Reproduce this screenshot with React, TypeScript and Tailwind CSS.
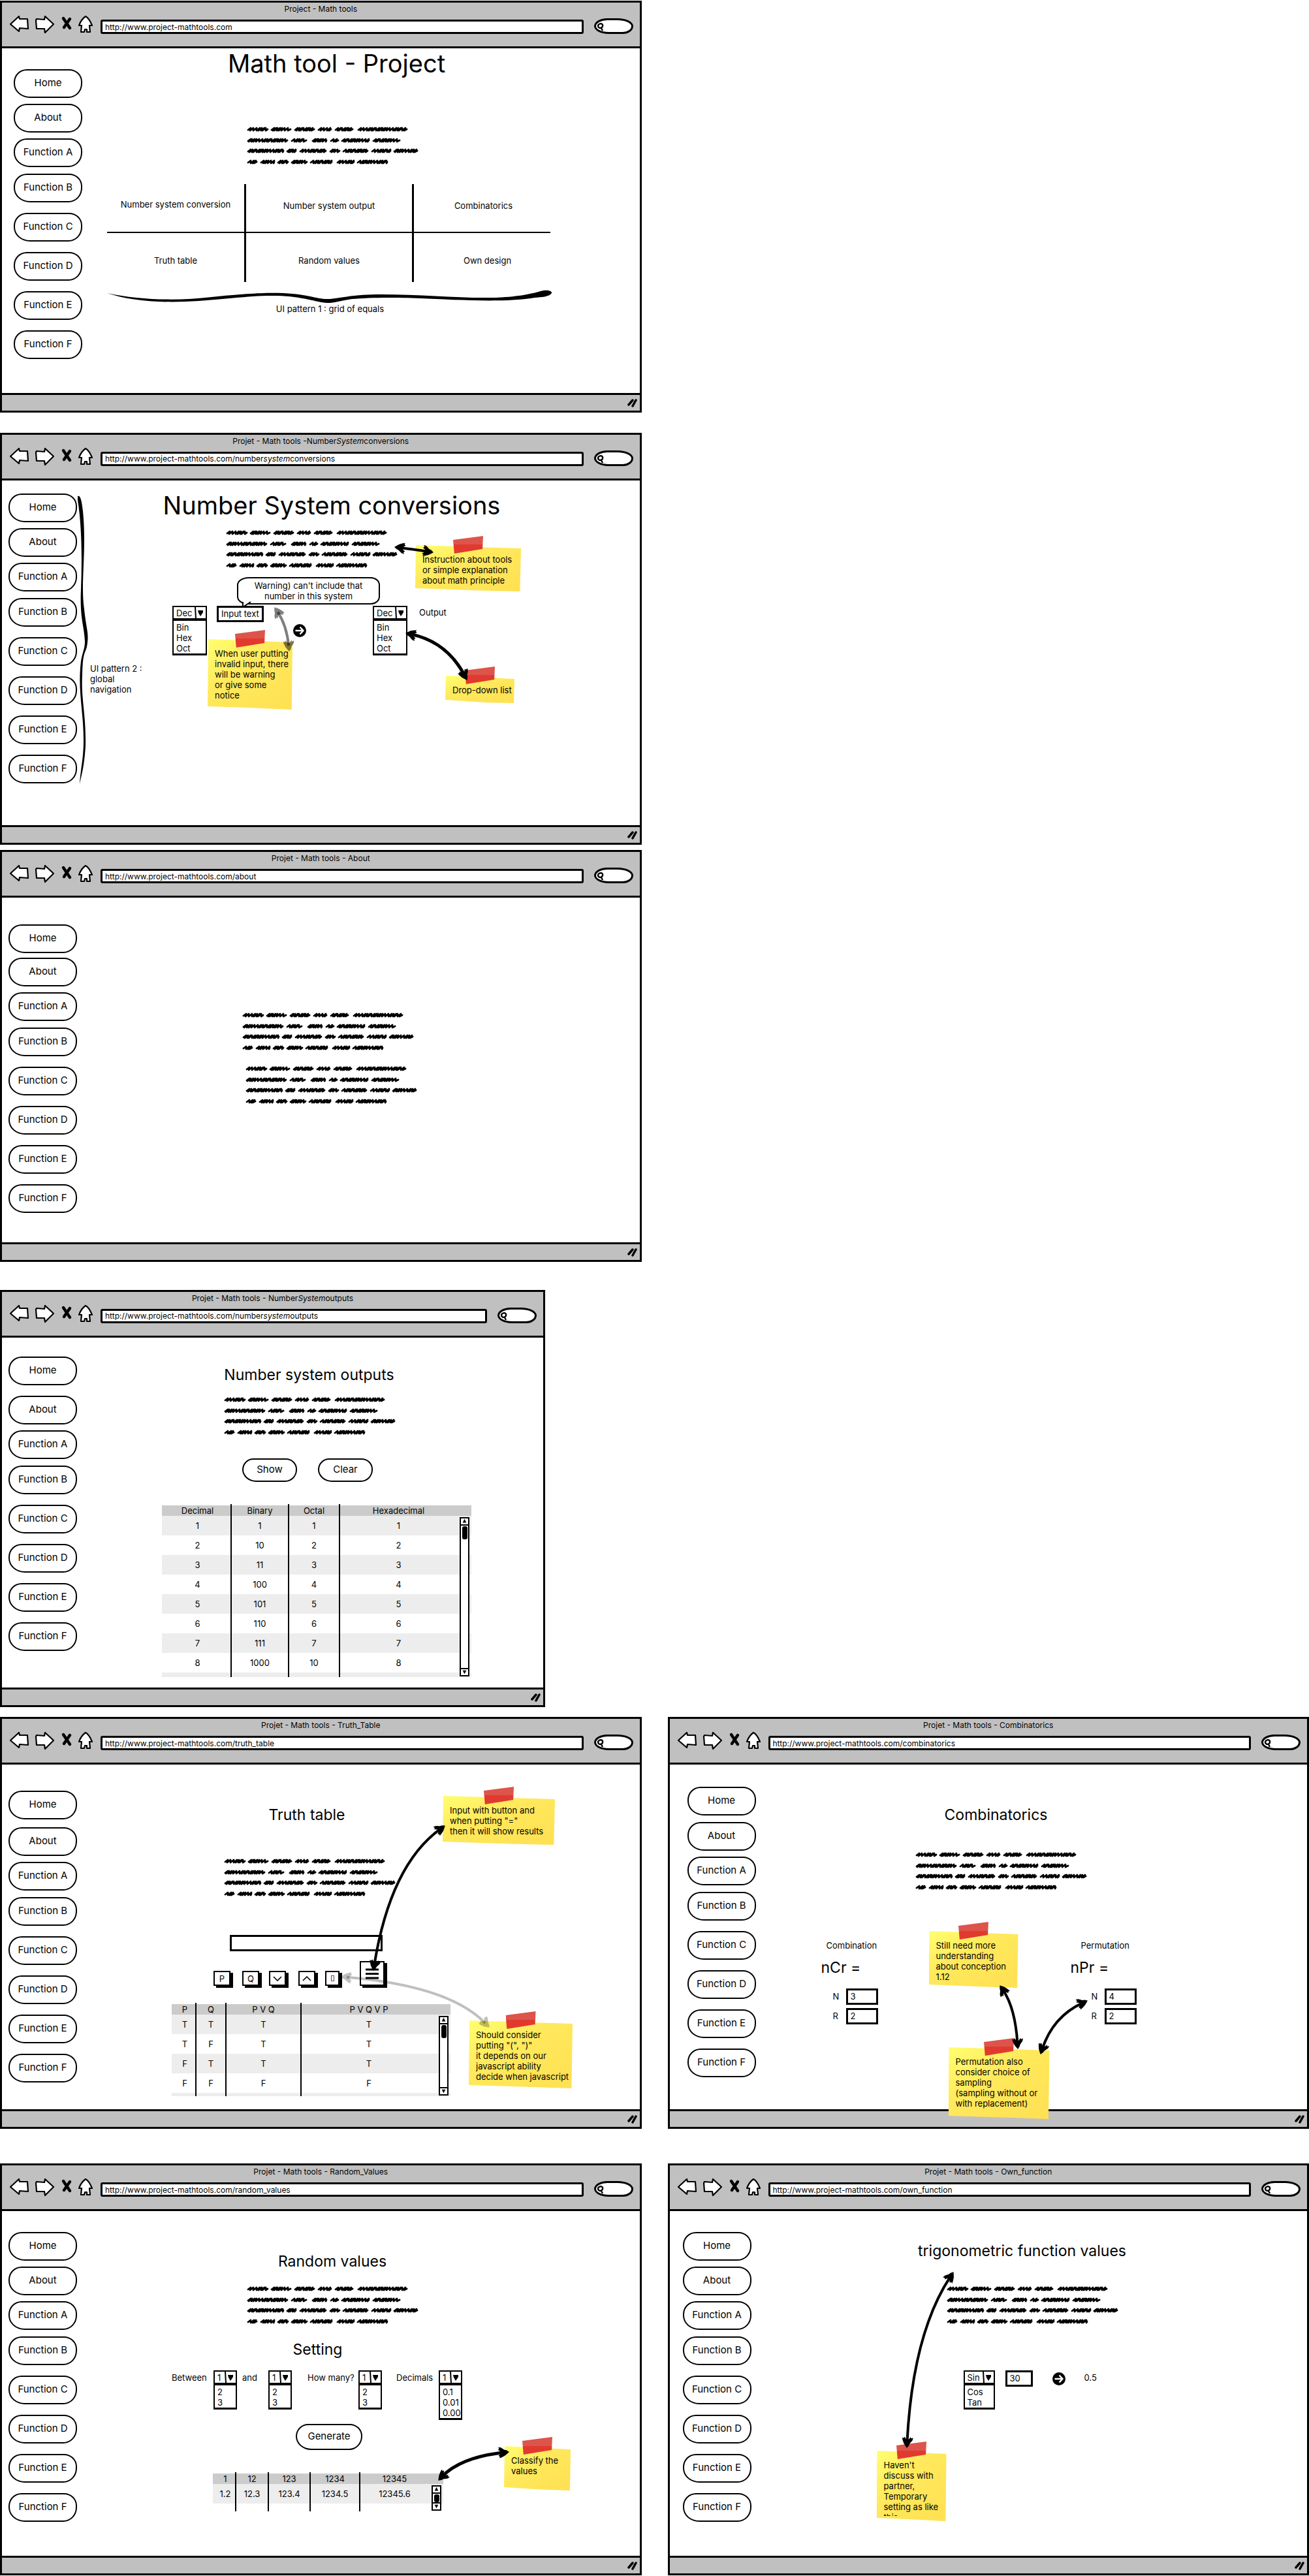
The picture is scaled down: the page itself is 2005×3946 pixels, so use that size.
import React, { ReactNode } from "react";

/* ---------- drawings ---------- */

const scribbleLines: number[][][] = [
  [[1, 33], [37, 68], [73, 104], [109, 130], [135, 163], [170, 246]],
  [[1, 63], [68, 92], [100, 123], [128, 141], [145, 188], [193, 235]],
  [[1, 57], [61, 76], [81, 122], [127, 143], [147, 186], [191, 221], [225, 262]],
  [[1, 16], [21, 43], [47, 64], [68, 93], [97, 131], [138, 165], [169, 216]],
];

function scribblePath(): string {
  const steps = [4, 5, 5, 3, 4, 2, 5, 3, 2, 4, 3];
  let d = "";
  let n = 0;
  scribbleLines.forEach((words, row) => {
    const y = [4, 21, 37, 54][row];
    words.forEach(([from, to]) => {
      let x = from + 1;
      d += `M${x} ${y + 1}`;
      while (x < to - 4) {
        const step = steps[n++ % steps.length];
        d += `L${x + 4} ${y - 2}L${Math.min(x + step - 1, to - 2)} ${y + 2}`;
        x += step;
      }
      d += `L${to - 1} ${y}`;
    });
  });
  return d;
}

function Scribble({ className }: { className: string }) {
  return (
    <svg width="264" height="60" viewBox="0 0 264 60" className={`shrink-0 ${className}`} aria-hidden="true">
      <path d={scribblePath()} fill="none" stroke="#000" strokeWidth="2.8" strokeLinecap="round" strokeLinejoin="round" />
    </svg>
  );
}

type Pt = [number, number];

function ArrowHead({ at, from }: { at: Pt; from: Pt }) {
  const angle = (Math.atan2(at[1] - from[1], at[0] - from[0]) * 180) / Math.PI;
  return (
    <path
      transform={`translate(${at[0]} ${at[1]}) rotate(${angle})`}
      d="M1 0L-3 -3L-6 -4L-11 -8L-15 -9L-14 -6L-16 -5L-12 -2L-13 2L-16 4L-14 6L-15 8L-11 7L-6 5L-3 3Z"
    />
  );
}

function DoubleArrow({ a, c, b, tone = "fill-black stroke-black", width = 4 }: { a: Pt; c: Pt; b: Pt; tone?: string; width?: number }) {
  const inset = (p: Pt): Pt => {
    const len = Math.hypot(c[0] - p[0], c[1] - p[1]);
    return [p[0] + ((c[0] - p[0]) * 8) / len, p[1] + ((c[1] - p[1]) * 8) / len];
  };
  const s = inset(a);
  const e = inset(b);
  return (
    <g className={tone}>
      <path d={`M${s[0]} ${s[1]}Q${c[0]} ${c[1]} ${e[0]} ${e[1]}`} fill="none" strokeWidth={width} />
      <g stroke="none">
        <ArrowHead at={a} from={c} />
        <ArrowHead at={b} from={c} />
      </g>
    </g>
  );
}

function Overlay({ children }: { children: ReactNode }) {
  return (
    <svg className="pointer-events-none absolute inset-0 h-full w-full overflow-visible" aria-hidden="true">
      {children}
    </svg>
  );
}

function Sticky({ className, lines }: { className: string; lines: string[] }) {
  return (
    <div className={`absolute ${className}`}>
      <div className="absolute inset-0 bg-linear-to-br from-[#ffff70] via-[#ffe95c] via-40% to-[#ffe052] [clip-path:polygon(1px_0,100%_5px,99%_100%,60%_98%,0_calc(100%-5px))]" />
      <div className="absolute -top-[14px] left-1/2 h-[27px] w-[46px] -translate-x-1/2 bg-linear-to-b from-[#dd544b] from-50% to-[#e2392f] to-50% [clip-path:polygon(0_6px,100%_0,98%_20px,4%_100%)]" />
      <div className="relative h-full overflow-hidden pb-2 pl-[11px] pt-[14px] text-[13px] leading-4 whitespace-nowrap">
        <div className="h-full overflow-hidden">
          {lines.map((line) => (
            <p key={line}>{line}</p>
          ))}
        </div>
      </div>
    </div>
  );
}

function CircleArrow({ className }: { className: string }) {
  return (
    <button type="button" aria-label="Convert" className={`h-5 w-5 shrink-0 ${className}`}>
      <svg viewBox="0 0 20 20" width="20" height="20">
        <circle cx="10" cy="10" r="10" />
        <path d="M3.5 10H15.5M10.5 4.5L15.5 10L10.5 15.5" fill="none" stroke="#fff" strokeWidth="2.4" />
      </svg>
    </button>
  );
}

/* ---------- controls ---------- */

const pill = "border-2 border-black bg-white pb-[2px] text-[15px] leading-5 rounded-[20px_20px_21px_25px/20px_19px_22px_22px]";

function Dropdown({ label, value, options, className }: { label: string; value: string; options: string[]; className: string }) {
  return (
    <div className={`shrink-0 text-[13px] leading-4 ${className}`}>
      <div className="relative flex h-[21px] border-[2px] border-black">
        <select aria-label={label} defaultValue={value} className="min-w-0 flex-1 appearance-none bg-white pl-1 outline-none">
          <option>{value}</option>
          {options.map((o) => (
            <option key={o}>{o}</option>
          ))}
        </select>
        <svg width="17" height="17" viewBox="0 0 17 17" className="pointer-events-none absolute right-0 top-0" aria-hidden="true">
          <path d="M1 0L2 17" stroke="#000" strokeWidth="2" />
          <path d="M5 5L13 5L13 8L9 14L6 9Z" />
        </svg>
      </div>
      <ul className="overflow-hidden border-2 border-b-[3px] border-black bg-white pl-1 pt-[2px]">
        {options.map((o) => (
          <li key={o}>{o}</li>
        ))}
      </ul>
    </div>
  );
}

function TextBox({ label, value, className }: { label: string; value: string; className: string }) {
  return (
    <input
      type="text"
      aria-label={label}
      defaultValue={value}
      className={`h-[25px] shrink-0 border-[3px] border-black bg-white px-1 pb-px text-[13px] outline-none ${className}`}
    />
  );
}

function Key({ label, children, className = "h-[23px] w-[26px]" }: { label: string; children: ReactNode; className?: string }) {
  return (
    <button
      type="button"
      aria-label={label}
      className={`flex shrink-0 items-center justify-center border-2 border-black bg-white text-[13px] leading-4 shadow-[4px_3px_0_#000] ${className}`}
    >
      {children}
    </button>
  );
}

function ScrollBar({ thumb }: { thumb: string }) {
  return (
    <div className="absolute bottom-px right-[3px] top-[18px] flex w-[15px] flex-col border-2 border-black bg-white">
      <svg width="11" height="11" viewBox="0 0 11 11" className="shrink-0 border-b-2 border-black" aria-hidden="true">
        <path d="M5.500 1L9 8H2Z" />
      </svg>
      <div className={`mx-auto mt-px w-[8px] rounded-[3px] bg-black ${thumb}`} />
      <svg width="11" height="11" viewBox="0 0 11 11" className="mt-auto shrink-0 border-t-2 border-black" aria-hidden="true">
        <path d="M5.500 9L9 2H2Z" />
      </svg>
    </div>
  );
}

function DataTable({ head, rows, cols, stub, className, thumb }: { head: string[]; rows: string[][]; cols: string[]; stub: string; className: string; thumb: string }) {
  const line = "border-l-[2px] border-black";
  return (
    <div className={`relative shrink-0 ${className}`}>
      <table className="w-full table-fixed border-separate border-spacing-0 text-[13px] leading-4">
        <colgroup>
          {cols.map((c, i) => (
            <col key={i} className={c} />
          ))}
        </colgroup>
        <thead>
          <tr className="bg-[#cbcbcb]">
            {head.map((h, i) => (
              <th
                key={i}
                className={`relative h-4 p-0 font-normal whitespace-nowrap ${
                  i ? `${line} before:absolute before:-left-[2px] before:-top-[2px] before:h-[2px] before:w-[2px] before:bg-black` : "pl-1"
                } ${i === head.length - 1 ? "pr-[22px]" : ""}`}
              >
                {h}
              </th>
            ))}
          </tr>
        </thead>
        <tbody>
          {rows.map((r, n) => (
            <tr key={n} className="odd:bg-[#ededed]">
              {r.map((v, i) => (
                <td key={i} className={`h-[30px] p-0 text-center ${i ? line : "pl-1"} ${i === r.length - 1 ? "pr-[22px]" : ""}`}>
                  {v}
                </td>
              ))}
            </tr>
          ))}
          <tr className="odd:bg-[#ededed]">
            {head.map((_, i) => (
              <td key={i} className={`p-0 ${stub} ${i ? line : ""}`} />
            ))}
          </tr>
        </tbody>
      </table>
      <ScrollBar thumb={thumb} />
    </div>
  );
}

/* ---------- browser window ---------- */

function Toolbar({ url }: { url: ReactNode }) {
  const address = "h-[22px] min-w-0 flex-1 rounded-[3px] border-[3px] border-black bg-white px-1 text-[12px] leading-4 outline-none";
  return (
    <div className="flex h-7 items-end pl-[12px] pr-[10px]">
      <button type="button" aria-label="Back" className="mr-[8px]">
        <svg width="30" height="28" viewBox="0 0 30 28" className="fill-white stroke-black" strokeWidth="2.2" strokeLinejoin="round">
          <path d="M1 13L14 1L15 5L27 5L28 20L15 19L14 24Z" />
        </svg>
      </button>
      <button type="button" aria-label="Forward" className="mr-[10px]">
        <svg width="30" height="28" viewBox="0 0 30 28" className="fill-white stroke-black" strokeWidth="2.2" strokeLinejoin="round">
          <path d="M2 7L3 5L15 6L16 1L29 13L16 26L15 20L3 20Z" />
        </svg>
      </button>
      <button type="button" aria-label="Stop" className="mr-[8px]">
        <svg width="18" height="28" viewBox="0 0 18 28">
          <path d="M4 4L14 19M14 5L5 18" stroke="#000" strokeWidth="4.500" strokeLinecap="round" />
        </svg>
      </button>
      <button type="button" aria-label="Home page" className="mr-[10px]">
        <svg width="25" height="28" viewBox="0 0 25 28" className="fill-white stroke-black" strokeWidth="2.2" strokeLinejoin="round">
          <path d="M12 1C16 3 20 10 22 15L18 15L19 25L14 25L14 21L11 21L10 25L5 25L6 15L2 15C4 9 8 4 12 1Z" />
        </svg>
      </button>
      {typeof url === "string" ? (
        <input type="text" aria-label="Address" defaultValue={url} className={address} />
      ) : (
        <div role="textbox" aria-label="Address" contentEditable suppressContentEditableWarning className={`${address} whitespace-nowrap`}>
          {url}
        </div>
      )}
      <div className="relative ml-4 h-6 w-[60px]">
        <input type="search" aria-label="Search" className="block h-full w-full rounded-[20px_24px_16px_22px/12px] border-[3px] border-black bg-white pl-5 text-[12px] outline-none" />
        <svg width="12" height="14" viewBox="0 0 12 14" className="absolute left-[4px] top-[6px]" aria-hidden="true">
          <path d="M2 6C2 2 8 1 9 4C10 9 3 11 2 6ZM7 9L9 13" fill="none" stroke="#000" strokeWidth="2.4" />
        </svg>
      </div>
    </div>
  );
}

const navItems = ["About", "Function A", "Function B", "Function C", "Function D", "Function E", "Function F"];
const navGaps = ["", "mt-[9px]", "mt-[10px]", "mt-4", "mt-4", "mt-4", "mt-4"];

interface WindowProps {
  title: ReactNode;
  url: ReactNode;
  nav: string;
  firstGap?: string;
  className?: string;
  body?: string;
  overlay?: ReactNode;
  children: ReactNode;
}

function BrowserWindow({ title, url, nav, firstGap = "mt-[9px]", className = "", body = "min-h-[528px]", overlay, children }: WindowProps) {
  return (
    <section className={`relative text-black ${className}`}>
      <div className="border-[3px] border-black bg-white">
        <header className="border-b-[3px] border-black bg-[#c0c0c0] pb-[19px]">
          <div className="text-center text-[12px] leading-5">{title}</div>
          <Toolbar url={url} />
        </header>
        <div className={`flex items-start ${body}`}>
          <nav className={`flex w-[140px] shrink-0 flex-col items-start ${nav}`}>
            <button type="button" className={`h-11 w-[105px] ${pill}`}>Home</button>
            {navItems.map((item, i) => (
              <button key={item} type="button" className={`h-11 w-[105px] whitespace-nowrap ${pill} ${i ? navGaps[i] : firstGap}`}>
                {item}
              </button>
            ))}
          </nav>
          <main className="flex min-w-0 flex-1 flex-col items-start">{children}</main>
        </div>
        <footer className="flex h-[27px] items-center justify-end border-t-[3px] border-black bg-[#c0c0c0] pr-[3px]">
          <svg width="16" height="16" viewBox="0 0 16 16" aria-hidden="true">
            <path d="M2 11L8 4M8 13L13 4" stroke="#000" strokeWidth="3.500" strokeLinecap="round" />
          </svg>
        </footer>
      </div>
      {overlay}
    </section>
  );
}

function PairInputs({ label, n, r, className }: { label: string; n: string; r: string; className: string }) {
  return (
    <div className={`flex flex-col gap-[5px] text-[13px] ${className}`}>
      {[["N", n], ["R", r]].map(([name, value]) => (
        <label key={name} className="flex items-center">
          <span className="w-5">{name}</span>
          <TextBox label={`${label} ${name}`} value={value} className="w-[49px]" />
        </label>
      ))}
    </div>
  );
}

/* ---------- pages ---------- */

const base = "http://www.project-mathtools.com";
const big = "text-[38px] leading-[44px] whitespace-nowrap";
const mid = "text-[23px] leading-7 whitespace-nowrap";

export default function App() {
  const cell = "flex items-center justify-center border-black";
  return (
    <div className="overflow-x-hidden bg-white pb-px pt-px font-['Inter',sans-serif]">
      <div className="grid grid-cols-2 gap-x-10">
        {/* Home */}
        <BrowserWindow title="Project - Math tools" url={base} nav="pl-[18px] pt-8" className="mb-[31px]">
          <div className="ml-[21px] flex w-[679px] flex-col">
            <h1 className={`mt-px pl-6 text-center ${big}`}>Math tool - Project</h1>
            <Scribble className="ml-[214px] mt-[75px]" />
            <div className="relative mt-7 grid grid-cols-[213px_257px_209px] grid-rows-[75px_75px] text-[13px] leading-4 whitespace-nowrap">
              <div className={`border-b-2 border-r-[3px] pb-3 ${cell}`}>Number system conversion</div>
              <div className={`border-b-2 border-r-[3px] pb-2 ${cell}`}>Number system output</div>
              <div className={`border-b-2 pb-2 pl-1 ${cell}`}>Combinatorics</div>
              <div className={`border-r-[3px] pt-2 ${cell}`}>Truth table</div>
              <div className={`border-r-[3px] pt-2 ${cell}`}>Random values</div>
              <div className={`pl-4 pt-2 ${cell}`}>Own design</div>
            </div>
            <svg width="682" height="20" viewBox="0 0 682 20" className="mt-3 overflow-visible" aria-hidden="true">
              <path d="M0 5C50 16 110 17 160 11C210 6 240 4 270 5C310 7 320 14 337 14C355 14 370 7 420 7C480 7 540 13 590 12C630 11 650 6 664 2C675 -1 682 2 681 5C677 11 665 11 655 12C610 20 530 15 480 13C430 11 400 12 375 14C360 16 350 20 337 20C320 19 300 10 260 9C220 8 180 15 120 18C70 20 30 15 0 5Z" />
            </svg>
            <p className="mt-px pl-1 text-center text-[13px] leading-4">UI pattern 1 : grid of equals</p>
          </div>
        </BrowserWindow>

        {/* Number system conversions */}
        <BrowserWindow
          title={<>Projet - Math tools -Number<i>System</i>conversions</>}
          url={<>{base}/number<i>system</i>conversions</>}
          nav="pl-[10px] pt-[20px]"
          className="col-start-1 mb-2"
          overlay={
            <>
              <p className="absolute left-[138px] top-[353px] w-[84px] text-[13px] leading-4">UI pattern 2 : global navigation</p>
              <div className="absolute left-[363px] top-[221px] w-[219px] rounded-[18px_14px_14px_16px/12px] border-2 border-black bg-white py-[3px] text-center text-[13px] leading-4">
                Warning) can't include that
                <br />
                number in this system
              </div>
              <Sticky className="left-[636px] top-[172px] h-[71px] w-[162px]" lines={["Instruction about tools", "or simple explanation", "about math principle"]} />
              <Sticky className="left-[318px] top-[316px] h-[108px] w-[130px]" lines={["When user putting", "invalid input, there", "will be warning", "or give some", "notice"]} />
              <Sticky className="left-[682px] top-[372px] h-[42px] w-[106px]" lines={["Drop-down list"]} />
              <Overlay>
                <path d="M372 257L372 268L384 257Z" fill="#fff" />
                <path d="M372 259L372 267L384 259" fill="none" stroke="#000" strokeWidth="2" strokeLinejoin="round" />
                <path d="M119 97C123 95 125 103 127 120C133 180 123 230 129 270C132 300 136 305 134 321C132 340 127 330 126 370C124 410 132 430 131 480C129 510 126 520 122 538C124 510 128 500 128 470C128 430 120 400 123 360C125 335 130 335 130 319C129 295 122 285 124 240C126 190 125 140 119 103Z" />
                <DoubleArrow a={[605, 175]} c={[630, 178]} b={[663, 183]} />
                <DoubleArrow a={[421, 268]} c={[439, 295]} b={[443, 334]} tone="fill-black/50 stroke-black/50" />
                <DoubleArrow a={[622, 307]} c={[684, 320]} b={[715, 378]} width={5} />
              </Overlay>
            </>
          }
        >
          <h1 className={`ml-[106px] mt-[16px] w-[518px] text-center ${big}`}>Number System conversions</h1>
          <Scribble className="ml-[203px] mt-4" />
          <div className="ml-[121px] mt-14 flex items-start">
            <Dropdown label="From system" value="Dec" options={["Bin", "Hex", "Oct"]} className="w-[53px]" />
            <TextBox label="Number to convert" value="Input text" className="ml-[15px] w-[72px]" />
            <CircleArrow className="ml-[45px] mt-7" />
            <Dropdown label="To system" value="Dec" options={["Bin", "Hex", "Oct"]} className="ml-[102px] w-[53px]" />
            <output className="ml-[18px] mt-[2px] text-[13px] leading-4">Output</output>
          </div>
        </BrowserWindow>

        {/* About */}
        <BrowserWindow title="Projet - Math tools - About" url={`${base}/about`} nav="pl-[10px] pt-[41px]" firstGap="mt-[7px]" className="col-start-1 mb-[43px]">
          <Scribble className="ml-[228px] mt-[176px]" />
          <Scribble className="ml-[233px] mt-[22px]" />
        </BrowserWindow>

        {/* Number system outputs */}
        <BrowserWindow
          title={<>Projet - Math tools - Number<i>System</i>outputs</>}
          url={<>{base}/number<i>system</i>outputs</>}
          nav="pl-[10px] pt-[29px]"
          firstGap="mt-4"
          body="min-h-[536px]"
          className="col-start-1 mb-[15px] w-[85%]"
        >
          <h2 className={`ml-[200px] mt-[43px] w-[261px] text-center ${mid}`}>Number system outputs</h2>
          <Scribble className="ml-[200px] mt-5" />
          <div className="ml-[228px] mt-[34px] flex gap-8">
            <button type="button" className={`h-9 w-[84px] ${pill}`}>Show</button>
            <button type="button" className={`h-9 w-[84px] ${pill}`}>Clear</button>
          </div>
          <DataTable
            className="ml-[105px] mt-9 w-[474px]"
            cols={["w-[105px]", "w-[88px]", "w-[78px]", "w-[203px]"]}
            head={["Decimal", "Binary", "Octal", "Hexadecimal"]}
            rows={[
              ["1", "1", "1", "1"],
              ["2", "10", "2", "2"],
              ["3", "11", "3", "3"],
              ["4", "100", "4", "4"],
              ["5", "101", "5", "5"],
              ["6", "110", "6", "6"],
              ["7", "111", "7", "7"],
              ["8", "1000", "10", "8"],
            ]}
            stub="h-[7px]"
            thumb="h-5"
          />
        </BrowserWindow>

        {/* Truth table */}
        <BrowserWindow
          title="Projet - Math tools - Truth_Table"
          url={`${base}/truth_table`}
          nav="pl-[10px] pt-[40px]"
          firstGap="mt-3"
          className="col-start-1 mb-[53px]"
          overlay={
            <>
              <Sticky className="left-[678px] top-[121px] h-[75px] w-[172px]" lines={["Input with button and", "when putting \"=\"", "then it will show results"]} />
              <Sticky
                className="left-[718px] top-[465px] h-[104px] w-[159px]"
                lines={["Should consider", "putting \"(\", \")\"", "it depends on our", "javascript ability", "decide when javascript"]}
              />
              <Overlay>
                <DoubleArrow a={[681, 167]} c={[598, 227]} b={[572, 388]} />
                <DoubleArrow a={[523, 398]} c={[688, 412]} b={[749, 475]} tone="fill-black/25 stroke-black/25" />
              </Overlay>
            </>
          }
        >
          <h2 className={`ml-[200px] mt-[63px] w-[254px] text-center ${mid}`}>Truth table</h2>
          <Scribble className="ml-[200px] mt-[53px]" />
          <TextBox label="Expression" value="" className="ml-[209px] mt-[57px] w-[234px]" />
          <div className="ml-[184px] mt-[15px] flex items-end pb-[3px]">
            <Key label="P">P</Key>
            <div className="ml-[18px]"><Key label="Q">Q</Key></div>
            <div className="ml-[15px]">
              <Key label="Or"><svg width="14" height="8" viewBox="0 0 14 8"><path d="M1 1L7 7L13 1" fill="none" stroke="#000" strokeWidth="1.600" /></svg></Key>
            </div>
            <div className="ml-[19px]">
              <Key label="And"><svg width="14" height="8" viewBox="0 0 14 8"><path d="M1 7L7 1L13 7" fill="none" stroke="#000" strokeWidth="1.600" /></svg></Key>
            </div>
            <div className="ml-[15px]">
              <Key label="Not" className="h-[23px] w-[22px]"><span className="h-[9px] w-[5px] border border-[#6b4a3a]" /></Key>
            </div>
            <div className="ml-[31px]">
              <Key label="Equals" className="h-[38px] w-[38px]">
                <svg width="20" height="17" viewBox="0 0 20 17"><path d="M0 2H20M0 8.500H20M0 15H20" stroke="#000" strokeWidth="3" /></svg>
              </Key>
            </div>
          </div>
          <DataTable
            className="ml-[120px] mt-[25px] w-[427px]"
            cols={["w-[36px]", "w-[46px]", "w-[115px]", "w-[230px]"]}
            head={["P", "Q", "P V Q", "P V Q V P"]}
            rows={[
              ["T", "T", "T", "T"],
              ["T", "F", "T", "T"],
              ["F", "T", "T", "T"],
              ["F", "F", "F", "F"],
            ]}
            stub="h-[5px]"
            thumb="h-5"
          />
        </BrowserWindow>

        {/* Combinatorics */}
        <BrowserWindow
          title="Projet - Math tools - Combinatorics"
          url={`${base}/combinatorics`}
          nav="pl-[27px] pt-[34px]"
          firstGap="mt-[10px]"
          className="mb-[53px]"
          overlay={
            <>
              <Sticky className="left-[400px] top-[328px] h-[87px] w-[137px]" lines={["Still need more", "understanding", "about conception", "1.12"]} />
              <Sticky
                className="left-[430px] top-[506px] h-[110px] w-[155px]"
                lines={["Permutation also", "consider choice of", "sampling", "(sampling without or", "with replacement)"]}
              />
              <Overlay>
                <DoubleArrow a={[509, 412]} c={[532, 446]} b={[536, 508]} />
                <DoubleArrow a={[642, 435]} c={[590, 459]} b={[571, 516]} />
              </Overlay>
            </>
          }
        >
          <h2 className={`ml-[236px] mt-[63px] w-[248px] text-center ${mid}`}>Combinatorics</h2>
          <Scribble className="ml-[236px] mt-[43px]" />
          <div className="ml-[92px] mt-[75px] flex">
            <div className="w-[382px]">
              <h3 className="pl-2 text-[13px] leading-4">Combination</h3>
              <p className={`mt-3 ${mid}`}>nCr =</p>
              <PairInputs label="Combination" n="3" r="2" className="mt-[18px] pl-[18px]" />
            </div>
            <div>
              <h3 className="pl-4 text-[13px] leading-4">Permutation</h3>
              <p className={`mt-3 ${mid}`}>nPr =</p>
              <PairInputs label="Permutation" n="4" r="2" className="mt-[18px] pl-8" />
            </div>
          </div>
        </BrowserWindow>

        {/* Random values */}
        <BrowserWindow
          title="Projet - Math tools - Random_Values"
          url={`${base}/random_values`}
          nav="pl-[10px] pt-[32px]"
          overlay={
            <>
              <Sticky className="left-[772px] top-[433px] h-[68px] w-[102px]" lines={["Classify the", "values"]} />
              <Overlay>
                <DoubleArrow a={[779, 442]} c={[706, 450]} b={[672, 485]} width={5} />
              </Overlay>
            </>
          }
        >
          <h2 className={`ml-[235px] mt-[63px] w-[262px] text-center ${mid}`}>Random values</h2>
          <Scribble className="ml-[235px] mt-6" />
          <h3 className={`ml-[235px] mt-[23px] w-[217px] text-center ${mid}`}>Setting</h3>
          <div className="ml-[120px] mt-[18px] flex items-start text-[13px] leading-[22px] whitespace-nowrap">
            <span className="w-16">Between</span>
            <Dropdown label="Between" value="1" options={["2", "3"]} className="w-9" />
            <span className="ml-2 w-10">and</span>
            <Dropdown label="and" value="1" options={["2", "3"]} className="w-9" />
            <span className="ml-6 w-[78px]">How many?</span>
            <Dropdown label="How many?" value="1" options={["2", "3"]} className="w-9" />
            <span className="ml-[22px] w-[65px]">Decimals</span>
            <Dropdown label="Decimals" value="1" options={["0.1", "0.01", "0.00"]} className="w-9" />
          </div>
          <button type="button" className={`ml-[310px] mt-[6px] h-10 w-[102px] ${pill}`}>Generate</button>
          <DataTable
            className="ml-[183px] mt-9 w-[353px]"
            cols={["w-[34px]", "w-[50px]", "w-[64px]", "w-[76px]", "w-[129px]"]}
            head={["1", "12", "123", "1234", "12345"]}
            rows={[["1.2", "12.3", "123.4", "1234.5", "12345.6"]]}
            stub="h-3"
            thumb="h-full"
          />
        </BrowserWindow>

        {/* Own function */}
        <BrowserWindow
          title="Projet - Math tools - Own_function"
          url={`${base}/own_function`}
          nav="pl-5 pt-[32px]"
          overlay={
            <>
              <Sticky
                className="left-[320px] top-[440px] h-[108px] w-[107px]"
                lines={["Haven't", "discuss with", "partner,", "Temporary", "setting as like", "this"]}
              />
              <Overlay>
                <DoubleArrow a={[437, 167]} c={[375, 261]} b={[366, 435]} />
              </Overlay>
            </>
          }
        >
          <h2 className={`ml-[240px] mt-[47px] w-[320px] text-center ${mid}`}>trigonometric function values</h2>
          <Scribble className="ml-[284px] mt-10" />
          <div className="ml-[310px] mt-[69px] flex items-start">
            <Dropdown label="Function" value="Sin" options={["Cos", "Tan"]} className="w-12" />
            <TextBox label="Angle" value="30" className="ml-4 w-[42px]" />
            <CircleArrow className="ml-[30px] mt-[3px]" />
            <output className="ml-[29px] mt-[3px] text-[13px] leading-4">0.5</output>
          </div>
        </BrowserWindow>
      </div>
    </div>
  );
}
